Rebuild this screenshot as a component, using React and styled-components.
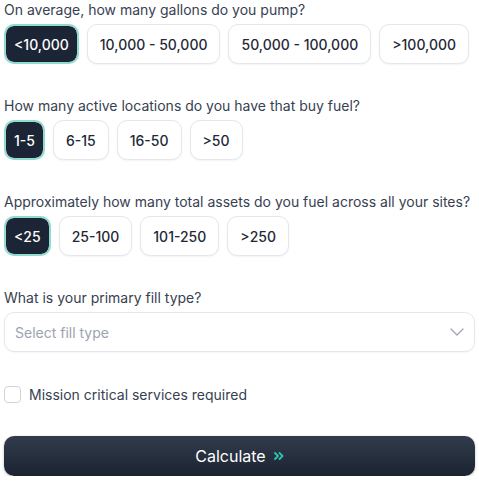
import React, { useState } from 'react';
import styled, { createGlobalStyle } from 'styled-components';

const GlobalStyle = createGlobalStyle`
  * { box-sizing: border-box; }
  body {
    margin: 0;
    background: #ffffff;
    font-family: Inter, "Noto Sans", sans-serif;
    -webkit-font-smoothing: antialiased;
  }
`

const Form = styled.div`
  padding: 0 4px;
  display: flex;
  flex-direction: column;
  gap: 32px;
`

const Field = styled.div`
  display: flex;
  flex-direction: column;
  gap: 4px;
`

const Label = styled.div`
  font-size: 14px;
  line-height: 20px;
  color: #374151;
`

const Options = styled.div`
  display: flex;
  gap: 8px;
`

const Option = styled.button`
  height: 40px;
  padding: ${p => (p.$active ? '0 8px' : '0 12px')};
  white-space: nowrap;
  border-radius: 10px;
  font-family: inherit;
  font-size: 14px;
  font-weight: 500;
  cursor: pointer;
  border: ${p => (p.$active ? '2px solid #8fdccf' : '1px solid #e5e7eb')};
  background: ${p => (p.$active ? '#1c2535' : '#ffffff')};
  background-clip: padding-box;
  color: ${p => (p.$active ? '#ffffff' : '#1f2937')};
  box-shadow: ${p => (p.$active ? 'none' : '0 1px 2px rgba(0,0,0,0.05)')};
`

const Select = styled.div`
  height: 40px;
  border: 1px solid #e5e7eb;
  border-radius: 10px;
  padding: 0 10px;
  display: flex;
  align-items: center;
  justify-content: space-between;
  font-size: 14px;
  color: #9ca3af;
  box-shadow: 0 1px 2px rgba(0,0,0,0.04);
`

const CheckRow = styled.label`
  display: flex;
  align-items: center;
  gap: 8px;
  height: 20px;
  font-size: 14px;
  color: #374151;
`

const Box = styled.span`
  width: 17px;
  height: 17px;
  border: 1px solid #d1d5db;
  border-radius: 4px;
  background: #fff;
`

const Submit = styled.button`
  height: 40px;
  border: none;
  border-radius: 10px;
  background: linear-gradient(180deg, #323c4c 0%, #1b2331 100%);
  color: #ffffff;
  font-family: inherit;
  font-size: 16px;
  font-weight: 400;
  display: flex;
  align-items: center;
  justify-content: center;
  gap: 8px;
  box-shadow: 0 1px 3px rgba(0,0,0,0.25);
  cursor: pointer;
`

const questions = [
  {
    label: 'On average, how many gallons do you pump?',
    options: ['<10,000', '10,000 - 50,000', '50,000 - 100,000', '>100,000'],
  },
  {
    label: 'How many active locations do you have that buy fuel?',
    options: ['1-5', '6-15', '16-50', '>50'],
  },
  {
    label: 'Approximately how many total assets do you fuel across all your sites?',
    options: ['<25', '25-100', '101-250', '>250'],
  },
]

function Chevron() {
  return (
    <svg width="14" height="8" viewBox="0 0 14 8" fill="none" stroke="#a1a7b1" strokeWidth="1.3" strokeLinecap="round" strokeLinejoin="round">
      <path d="M1 1l6 6 6-6" />
    </svg>
  )
}

function Arrows() {
  return (
    <svg width="10" height="8" viewBox="0 0 10 8" fill="none" stroke="#2cc4b0" strokeWidth="1.8" strokeLinecap="round" strokeLinejoin="round">
      <path d="M1 1l3 3-3 3" />
      <path d="M5.5 1l3 3-3 3" />
    </svg>
  )
}

export default function App() {
  const [picked, setPicked] = useState([0, 0, 0])

  return (
    <>
      <GlobalStyle />
      <Form>
        {questions.map((q, qi) => (
          <Field key={qi}>
            <Label>{q.label}</Label>
            <Options>
              {q.options.map((o, oi) => (
                <Option
                  key={o}
                  $active={picked[qi] === oi}
                  onClick={() => setPicked(p => p.map((v, i) => (i === qi ? oi : v)))}
                >
                  {o}
                </Option>
              ))}
            </Options>
          </Field>
        ))}
        <Field>
          <Label>What is your primary fill type?</Label>
          <Select>
            Select fill type
            <Chevron />
          </Select>
        </Field>
        <CheckRow>
          <Box />
          Mission critical services required
        </CheckRow>
        <Submit>
          Calculate
          <Arrows />
        </Submit>
      </Form>
    </>
  )
}
